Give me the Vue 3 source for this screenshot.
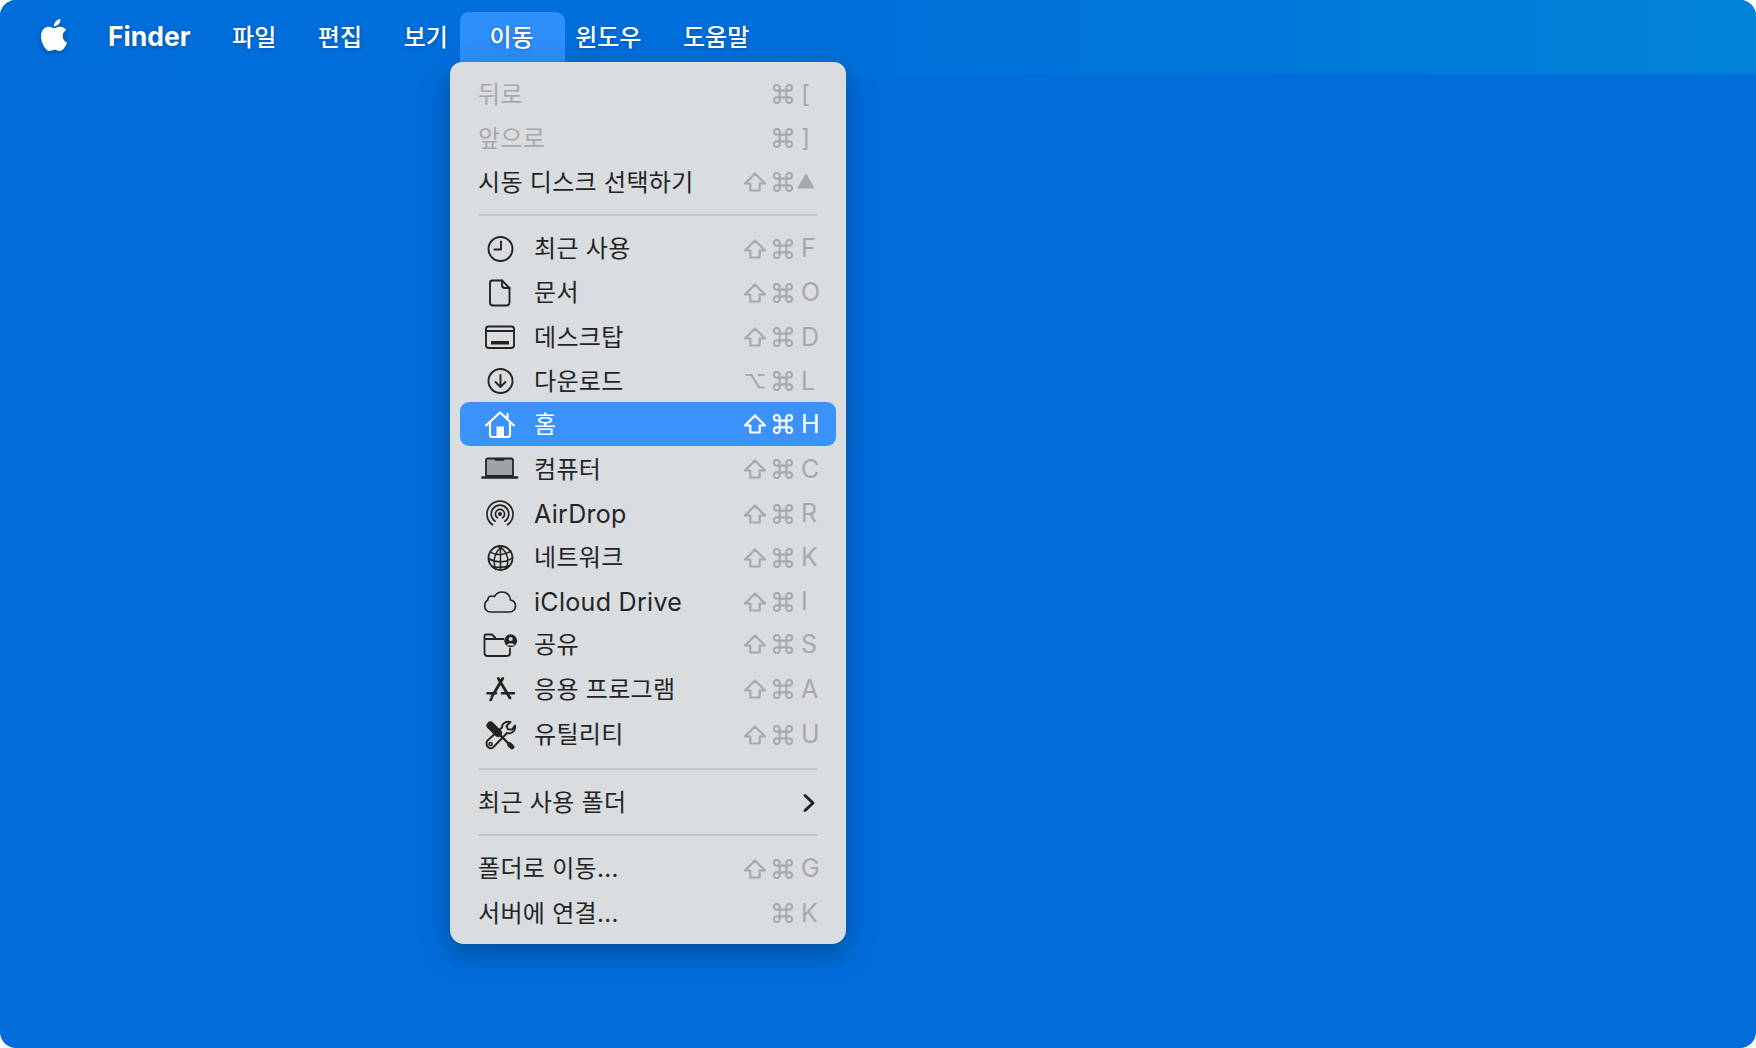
<template>
  <div class="screen">
    <header class="menubar">
      <svg class="apple" viewBox="0 0 24 24" width="32" height="32"><path fill="#fff" :d="appleLogo" /></svg>
      <span v-for="m in barItems" :key="m.label" class="bar-item" :class="{ app: m.app, open: m.open }">{{ m.label }}</span>
    </header>

    <section class="menu">
      <template v-for="(item, i) in menu" :key="i">
        <div v-if="item.sep" class="sep" :class="{ wide: item.wide }"><i></i></div>
        <div v-else class="row" :class="[item.nudge, { off: item.off, active: item.active }]">
          <span v-if="item.icon" class="ic">
            <svg viewBox="0 0 44 40" width="44" height="40" stroke-linecap="round" stroke-linejoin="round">
              <path
                v-for="(p, j) in icons[item.icon]"
                :key="j"
                :d="p.d"
                :fill="p.f || 'none'"
                :stroke="p.f ? 'none' : 'currentColor'"
                :stroke-width="p.w || 1.9"
              />
            </svg>
          </span>
          <span class="label" :class="{ latin: item.latin }">{{ item.label }}</span>
          <svg v-if="item.sub" class="chev" viewBox="0 0 14 20" width="14" height="20"><path d="M3 2.5 11 10 3 17.5" fill="none" stroke="#232426" stroke-width="3" stroke-linecap="round" stroke-linejoin="round" /></svg>
          <span v-else class="keys">
            <svg v-if="item.mod === 'shift'" class="k-mod" viewBox="0 0 22 20" width="22" height="20"><path d="M11 1.5 21 11.5H15.7V18.5H6.3V11.5H1Z" fill="none" stroke="currentColor" stroke-width="2.2" stroke-linejoin="round" /></svg>
            <svg v-if="item.mod === 'alt'" class="k-mod" viewBox="0 0 22 20" width="22" height="20"><path d="M1.5 4H7.5L15 16.5H20.5M14 4H20.5" fill="none" stroke="currentColor" stroke-width="2.2" /></svg>
            <svg class="k-cmd" viewBox="1 1 18 18" width="20" height="20"><path d="M7 7H4.6A2.6 2.6 0 1 1 7 4.6V15.4A2.6 2.6 0 1 1 4.6 13H15.4A2.6 2.6 0 1 1 13 15.4V4.6A2.6 2.6 0 1 1 15.4 7H7" fill="none" stroke="currentColor" stroke-width="1.9" /></svg>
            <svg v-if="item.key === 'up'" class="k-up" viewBox="0 0 18 16" width="18" height="16"><path d="M9 1 17 15H1Z" fill="currentColor" stroke="currentColor" stroke-linejoin="round" /></svg>
            <span v-else class="k-letter">{{ item.key }}</span>
          </span>
        </div>
      </template>
    </section>
  </div>
</template>

<script setup>
const appleLogo = 'M12.152 6.896c-.948 0-2.415-1.078-3.96-1.04-2.04.027-3.91 1.183-4.961 3.014-2.117 3.675-.546 9.103 1.519 12.09 1.013 1.454 2.208 3.09 3.792 3.039 1.52-.065 2.09-.987 3.935-.987 1.831 0 2.35.987 3.96.948 1.637-.026 2.676-1.48 3.676-2.948 1.156-1.688 1.636-3.325 1.662-3.415-.039-.013-3.182-1.221-3.22-4.857-.026-3.04 2.48-4.494 2.597-4.559-1.429-2.09-3.623-2.324-4.39-2.376-2-.156-3.675 1.09-4.61 1.09zM15.53 3.83c.843-1.012 1.4-2.427 1.245-3.83-1.207.052-2.662.805-3.532 1.818-.78.896-1.454 2.338-1.273 3.714 1.338.104 2.715-.688 3.559-1.701'

const barItems = [
  { label: 'Finder', app: true },
  { label: '파일' },
  { label: '편집' },
  { label: '보기' },
  { label: '이동', open: true },
  { label: '윈도우' },
  { label: '도움말' },
]

const circle = (x, y, r) => `M${x - r} ${y}a${r} ${r} 0 1 0 ${2 * r} 0a${r} ${r} 0 1 0 ${-2 * r} 0Z`

const icons = {
  clock: [{ d: circle(22.5, 20, 12) }, { d: 'M23 12.5V20.5H16.5' }],
  doc: [
    { d: 'M14.5 7.5H24L31.5 15V29.5A3 3 0 0 1 28.5 32.5H15A3 3 0 0 1 12 29.5V10A2.5 2.5 0 0 1 14.5 7.5Z' },
    { d: 'M24 7.5V12A3 3 0 0 0 27 15H31.5' },
  ],
  desktop: [
    { d: 'M10.5 9.5H33.5A2.5 2.5 0 0 1 36 12V28.5A2.5 2.5 0 0 1 33.5 31H10.5A2.5 2.5 0 0 1 8 28.5V12A2.5 2.5 0 0 1 10.5 9.5ZM8 14H36' },
    { d: 'M13 24H31V27.5H13Z', f: 'currentColor' },
  ],
  download: [{ d: circle(22.5, 20, 12) }, { d: 'M22.5 14V26M17.5 21 22.5 26 27.5 21' }],
  home: [
    { d: 'M8 21.5 22 8.5 36 21.5M29.5 15V10M12 18.5V30.5A2.5 2.5 0 0 0 14.5 33H29.5A2.5 2.5 0 0 0 32 30.5V18.5', w: 2.2 },
    { d: 'M18.5 22.5H26V33H18.5Z', f: 'currentColor' },
  ],
  laptop: [
    { d: 'M10 9.5H33A2 2 0 0 1 35 11.5V27H8V11.5A2 2 0 0 1 10 9.5Z', f: '#a0a3a6' },
    { d: 'M10 9.5H33A2 2 0 0 1 35 11.5V27H8V11.5A2 2 0 0 1 10 9.5Z', w: 1.8 },
    { d: 'M4.5 28.5H39', w: 2.6 },
    { d: 'M18 10.5H25', w: 2.6 },
  ],
  airdrop: [
    { d: 'M14.5 30.7A13 13 0 1 1 29.5 30.7', w: 1.7 },
    { d: 'M17 27.2A8.8 8.8 0 1 1 27 27.2', w: 1.7 },
    { d: 'M19.4 23.8A4.6 4.6 0 1 1 24.6 23.8', w: 1.7 },
    { d: circle(22, 20, 2), f: 'currentColor' },
  ],
  globe: [
    { d: circle(22.5, 20, 12), w: 1.8 },
    { d: 'M25 8.2C18 12 13.5 22 18 31.5M20 8.2C28 11 33 22 27.5 31M22.5 8V32M12 14C18 18 28 17 33 13M10.5 20.5C18 25 28 25 34.5 19.5M14 28.5C19 29.5 27 29.5 31.5 27.5', w: 1.5 },
  ],
  cloud: [
    { d: 'M12.5 30H31.5C35 30 37.5 27.3 37.5 24C37.5 21 35.5 18.6 32.5 18C32.2 13.2 28.5 10 24 10C20.5 10 18 11.8 16.5 14.6C15.7 14.2 14.8 14 14 14C11.5 14 9.8 15.8 9.7 18.3C7.8 19.2 6.7 21.5 6.7 24C6.7 27.3 9.2 30 12.5 30Z', w: 1.7 },
  ],
  shared: [
    { d: 'M25.5 15H6.5V12A1.5 1.5 0 0 1 8 10.5H14L17 13.5M6.5 15V29A3 3 0 0 0 9.5 32H29A3 3 0 0 0 32 29V24.5', w: 1.8 },
    { d: circle(32.7, 16.7, 6.4), f: 'currentColor' },
    { d: circle(32.7, 15, 2), f: '#d9dde0' },
    { d: 'M29 21.5C29.5 18.6 36 18.6 36.5 21.5Z', f: '#d9dde0' },
  ],
  apps: [
    { d: 'M24.7 9.5 14 27.5M20.3 9.5 32 29', w: 2.8 },
    { d: 'M9.5 24.3H18M24 24.3H36', w: 2.6 },
    { d: 'M12.5 31 13.5 29.5', w: 2.6 },
  ],
  tools: [
    { d: 'M12.5 10.5 20 18', w: 8 },
    { d: 'M20 18 31 29', w: 2.4 },
    { d: 'M31.5 29.5 34 32', w: 4.6 },
    { d: 'M9.5 25.5 24 12.5C24 8.5 28 5.8 32.5 7L28.5 11 30 14.3 34 14.6 37 10.5C38 15.5 34 19.5 29 18L15 32.5C11.5 35.5 6.5 30 9.5 25.5Z', w: 1.9 },
    { d: circle(12.5, 29, 1.6), w: 1.5 },
  ],
}

const menu = [
  { label: '뒤로', key: '[', off: true },
  { label: '앞으로', key: ']', off: true },
  { label: '시동 디스크 선택하기', mod: 'shift', key: 'up' },
  { sep: true },
  { label: '최근 사용', icon: 'clock', mod: 'shift', key: 'F' },
  { label: '문서', icon: 'doc', mod: 'shift', key: 'O' },
  { label: '데스크탑', icon: 'desktop', mod: 'shift', key: 'D' },
  { label: '다운로드', icon: 'download', mod: 'alt', key: 'L' },
  { label: '홈', icon: 'home', mod: 'shift', key: 'H', active: true },
  { label: '컴퓨터', icon: 'laptop', mod: 'shift', key: 'C' },
  { label: 'AirDrop', icon: 'airdrop', mod: 'shift', key: 'R', latin: true },
  { label: '네트워크', icon: 'globe', mod: 'shift', key: 'K' },
  { label: 'iCloud Drive', icon: 'cloud', mod: 'shift', key: 'I', latin: true },
  { label: '공유', icon: 'shared', mod: 'shift', key: 'S', nudge: 'up2' },
  { label: '응용 프로그램', icon: 'apps', mod: 'shift', key: 'A', nudge: 'down1' },
  { label: '유틸리티', icon: 'tools', mod: 'shift', key: 'U', nudge: 'down1' },
  { sep: true, wide: true },
  { label: '최근 사용 폴더', sub: true },
  { sep: true },
  { label: '폴더로 이동...', mod: 'shift', key: 'G' },
  { label: '서버에 연결...', key: 'K' },
]
</script>

<style>
html,body{background:#fff}
</style>

<style scoped>
.screen{position:relative;width:1756px;height:1048px;overflow:hidden;background:#006ddb;border-radius:16px;font-family:Inter,"Noto Sans CJK KR",sans-serif}
.menubar{height:74px;display:flex;align-items:center;padding-left:38px;box-sizing:border-box;color:#fff;background:linear-gradient(90deg,#006ddb 0%,#006fdb 45%,#0082d8 100%);text-shadow:0 1px 4px rgba(0,0,0,.25)}
.apple{flex:none;margin:-4px 17.2px 0 0;filter:drop-shadow(0 2px 3px rgba(0,0,0,.25))}
.bar-item{display:flex;align-items:center;box-sizing:border-box;height:50px;padding:0 20.8px 4px;font-size:24px;font-weight:500;border-radius:9px 9px 0 0}
.bar-item.app{font-weight:700;font-size:26.5px;padding-bottom:2px}
.bar-item.open{padding:0 31px 4px 29.5px;margin:0 -10.2px 0 -8.7px;background:#2d8ffb}
.menu{position:absolute;left:450px;top:62px;width:396px;height:882px;box-sizing:border-box;padding:10px 10px 0;background:#d9dde0;border-radius:12px 12px 14px 14px;box-shadow:0 10px 30px rgba(0,0,0,.28);color:#232426}
.row{display:flex;align-items:center;height:44.2px;padding:0 18px;border-radius:9px;font-size:24px}
.row.off{color:#a6a9ac}
.row.active{background:#3c92fb;color:#fff;height:44px;margin-bottom:.2px;margin-top:-1px}
.row.active + .row{margin-top:1px}
.row.up2{margin-top:-2px}
.row.down1{margin-top:1px}
.sep{display:flex;align-items:center;height:22px;padding:0 18px}
.sep.wide{height:21px;padding-top:3px}
.sep i{display:block;width:100%;height:2px;margin-top:-2px;background:#c2c6c9}
.ic{flex:none;display:flex;width:44px;margin-right:12px}
.label{flex:1;white-space:nowrap;letter-spacing:.3px;position:relative;top:-2px}
.label.latin{font-size:25px;top:0}
.keys{flex:none;display:flex;align-items:center;width:74px;color:#a6a9ac}
.active .keys{color:#fff}
.k-mod{flex:none;margin-right:7px}
.k-cmd{flex:none;margin-right:8px}
.keys .k-cmd:first-child{margin-left:29px}
.k-up{flex:none;margin:-2px 0 0 -4px}
.k-letter{font-size:25px;line-height:1}
.chev{flex:none;margin-right:2px}
</style>
